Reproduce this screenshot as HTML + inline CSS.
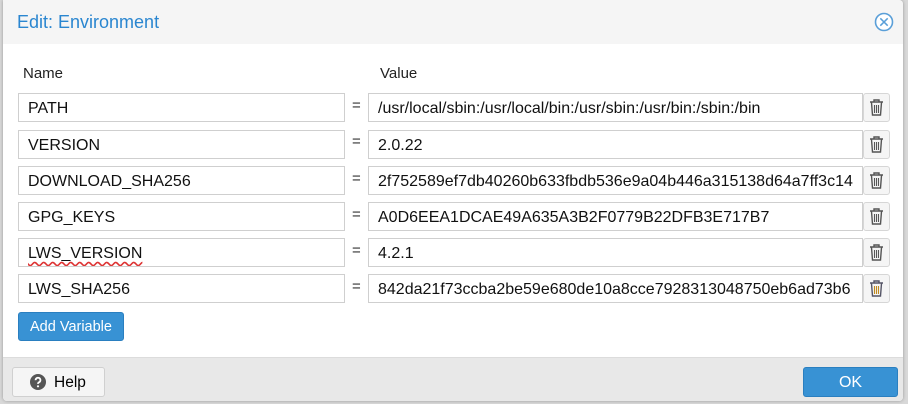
<!DOCTYPE html>
<html><head><style>
body{margin:0;width:908px;height:404px;background:#d8d8d8;font-family:"Liberation Sans",sans-serif;position:relative;overflow:hidden}
.dlg{position:absolute;left:3px;top:0;width:900px;height:401px;background:#fff;border-radius:0 4px 4px 4px;box-shadow:0 0 3px rgba(0,0,0,.3);overflow:hidden}
.hdr{position:absolute;left:0;top:0;right:0;height:44px;background:#f5f5f5}
.title{position:absolute;left:14px;top:12px;font-size:18px;color:#2a86d0}
.close{position:absolute;right:9px;top:12px}
.lbl{position:absolute;top:65px;font-size:15px;color:#222}
.in{position:absolute;height:27px;border:1px solid #cfcfcf;background:#fff;font-size:16px;line-height:29px;padding-left:9px;box-sizing:content-box;color:#111;white-space:nowrap;overflow:hidden}
.eq{position:absolute;left:349px;font-size:15px;color:#333}
.tr{position:absolute;left:860px;width:25px;height:27px;border:1px solid #d6d6d6;border-radius:3px;background:#f5f5f5}
.tr svg{position:absolute;left:5px;top:5px}
.add{position:absolute;left:15px;top:312px;width:104px;height:27px;background:#3892d4;border:1px solid #2a7fc0;border-radius:3px;color:#fff;font-size:14.5px;line-height:28px;text-align:center}
.ftr{position:absolute;left:0;right:0;top:357px;bottom:0;background:#e8e8e8;border-top:1px solid #dcdcdc}
.help{position:absolute;left:9px;top:9px;width:91px;height:28px;background:#f5f5f5;border:1px solid #d0d0d0;border-radius:3px;font-size:15.5px;line-height:29px}
.ok{position:absolute;left:800px;top:9px;width:93px;height:28px;background:#3892d4;border:1px solid #2a7fc0;border-radius:3px;color:#fff;font-size:16px;line-height:29px;text-align:center}
</style></head><body>
<div class="dlg">
<div class="hdr"><div class="title">Edit: Environment</div>
<svg class="close" width="20" height="20" viewBox="0 0 20 20"><circle cx="10" cy="10" r="8.5" fill="#fff" stroke="#5a9fd8" stroke-width="1.6"/><path d="M6.3 6.3L13.7 13.7M13.7 6.3L6.3 13.7" stroke="#5a9fd8" stroke-width="1.5"/></svg></div>
<div class="lbl" style="left:20px">Name</div><div class="lbl" style="left:377px">Value</div>

<div class="in" style="left:15px;top:93px;width:316px">PATH</div><div class="eq" style="top:97px">=</div><div class="in" style="left:365px;top:93px;width:484px">/usr/local/sbin:/usr/local/bin:/usr/sbin:/usr/bin:/sbin:/bin</div>
<div class="tr" style="top:93px"><svg width="15" height="17" viewBox="0 0 15 17"><path d="M1 3h13M5 3V1h5v2M2.5 3.5l1 12.5h8l1-12.5" fill="none" stroke="#555" stroke-width="1.4"/><path d="M5.5 6v8M7.5 6v8M9.5 6v8" stroke="#555" stroke-width="1.1"/></svg></div>

<div class="in" style="left:15px;top:130px;width:316px">VERSION</div><div class="eq" style="top:133px">=</div><div class="in" style="left:365px;top:130px;width:484px">2.0.22</div>
<div class="tr" style="top:130px"><svg width="15" height="17" viewBox="0 0 15 17"><path d="M1 3h13M5 3V1h5v2M2.5 3.5l1 12.5h8l1-12.5" fill="none" stroke="#555" stroke-width="1.4"/><path d="M5.5 6v8M7.5 6v8M9.5 6v8" stroke="#555" stroke-width="1.1"/></svg></div>

<div class="in" style="left:15px;top:166px;width:316px">DOWNLOAD_SHA256</div><div class="eq" style="top:170px">=</div><div class="in" style="left:365px;top:166px;width:484px">2f752589ef7db40260b633fbdb536e9a04b446a315138d64a7ff3c14</div>
<div class="tr" style="top:166px"><svg width="15" height="17" viewBox="0 0 15 17"><path d="M1 3h13M5 3V1h5v2M2.5 3.5l1 12.5h8l1-12.5" fill="none" stroke="#555" stroke-width="1.4"/><path d="M5.5 6v8M7.5 6v8M9.5 6v8" stroke="#555" stroke-width="1.1"/></svg></div>

<div class="in" style="left:15px;top:202px;width:316px">GPG_KEYS</div><div class="eq" style="top:206px">=</div><div class="in" style="left:365px;top:202px;width:484px">A0D6EEA1DCAE49A635A3B2F0779B22DFB3E717B7</div>
<div class="tr" style="top:202px"><svg width="15" height="17" viewBox="0 0 15 17"><path d="M1 3h13M5 3V1h5v2M2.5 3.5l1 12.5h8l1-12.5" fill="none" stroke="#555" stroke-width="1.4"/><path d="M5.5 6v8M7.5 6v8M9.5 6v8" stroke="#555" stroke-width="1.1"/></svg></div>

<div class="in" style="left:15px;top:238px;width:316px"><span style="text-decoration:underline wavy #d33;text-underline-offset:3px">LWS_VERSION</span></div><div class="eq" style="top:242px">=</div><div class="in" style="left:365px;top:238px;width:484px">4.2.1</div>
<div class="tr" style="top:238px"><svg width="15" height="17" viewBox="0 0 15 17"><path d="M1 3h13M5 3V1h5v2M2.5 3.5l1 12.5h8l1-12.5" fill="none" stroke="#555" stroke-width="1.4"/><path d="M5.5 6v8M7.5 6v8M9.5 6v8" stroke="#555" stroke-width="1.1"/></svg></div>

<div class="in" style="left:15px;top:274px;width:316px">LWS_SHA256</div><div class="eq" style="top:278px">=</div><div class="in" style="left:365px;top:274px;width:484px">842da21f73ccba2be59e680de10a8cce7928313048750eb6ad73b6</div>
<div class="tr" style="top:274px"><svg width="15" height="17" viewBox="0 0 15 17"><path d="M1 3h13M5 3V1h5v2M2.5 3.5l1 12.5h8l1-12.5" fill="none" stroke="#556" stroke-width="1.4"/><path d="M5.5 6v8M7.5 6v8M9.5 6v8" stroke="#c08a20" stroke-width="1.1"/></svg></div>

<div class="add">Add Variable</div>
<div class="ftr">
<div class="help"><svg style="position:absolute;left:17px;top:6px" width="16" height="16" viewBox="0 0 16 16"><circle cx="8" cy="8" r="8" fill="#555"/><path d="M5.6 6.2a2.4 2.4 0 1 1 3.4 2.1c-.8.4-1 .8-1 1.6" fill="none" stroke="#fff" stroke-width="1.8"/><circle cx="8" cy="12.3" r="1.1" fill="#fff"/></svg><span style="position:absolute;left:41px">Help</span></div>
<div class="ok">OK</div>
</div>
</div>
</body></html>
